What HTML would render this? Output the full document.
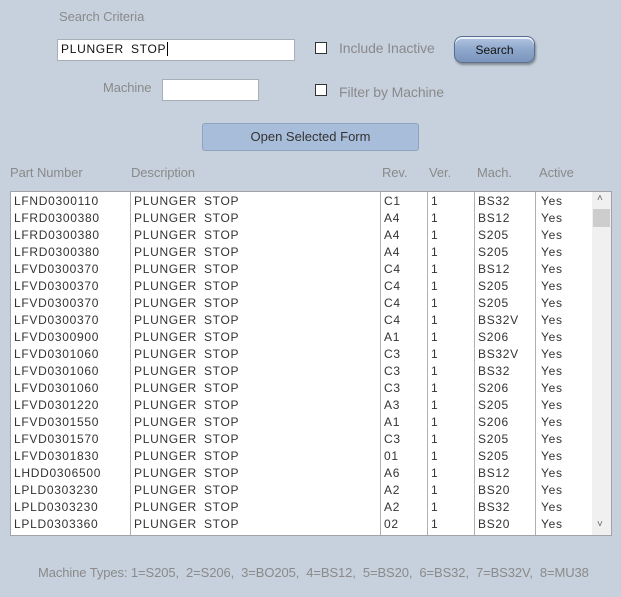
<!DOCTYPE html><html><head><style>
body{margin:0;width:621px;height:597px;background:#c6d1dd;font-family:"Liberation Sans",sans-serif;position:relative;overflow:hidden}
.a{position:absolute;white-space:nowrap}
.lbl{color:#8a8a8a;font-size:13px;letter-spacing:-0.1px}
.inp{background:#fff;border:1px solid #a8aeb6;box-sizing:border-box}
.cb{width:12px;height:12px;border:1px solid #333;background:#fff;box-sizing:border-box}
.list{position:absolute;left:10px;top:191px;width:602px;height:345px;background:#fff;border:1px solid #a0a4a8;box-sizing:border-box}
.r{position:absolute;left:0;width:580px;height:17px;font-size:12px;color:#333;letter-spacing:0.7px;word-spacing:3px;white-space:nowrap}
.r span{position:absolute;top:2px}
.vl{position:absolute;top:0;width:1px;height:343px;background:#b0b0b0}
</style></head><body>
<div class="a lbl" style="left:59px;top:9px">Search Criteria</div>
<div class="a inp" style="left:57px;top:39px;width:238px;height:22px"></div>
<div class="a" style="left:61px;top:42px;font-size:12px;color:#111;letter-spacing:0.7px;word-spacing:3px">PLUNGER STOP<span style="border-left:1px solid #000;margin-left:1px"></span></div>
<div class="a cb" style="left:315px;top:42px"></div>
<div class="a lbl" style="left:339px;top:40px;font-size:14px">Include Inactive</div>
<div class="a" style="left:454px;top:36px;width:81px;height:27px;border-radius:8px;background:linear-gradient(#b3c6e0,#8ea7cc 50%,#7b94bb);border:1px solid #5a6f90;box-sizing:border-box;box-shadow:1px 2px 2px rgba(0,0,0,.35),inset 0 2px 0 #e8f0fa;font-size:12px;text-align:center;line-height:26px;color:#111">Search</div>
<div class="a lbl" style="left:103px;top:80px">Machine</div>
<div class="a inp" style="left:162px;top:79px;width:97px;height:22px"></div>
<div class="a cb" style="left:315px;top:84px"></div>
<div class="a lbl" style="left:339px;top:84px;font-size:14px">Filter by Machine</div>
<div class="a" style="left:202px;top:123px;width:217px;height:28px;background:#a8bdd9;border:1px solid #8fa3bd;border-radius:3px;box-sizing:border-box;font-size:13px;text-align:center;line-height:26px;color:#333">Open Selected Form</div>
<div class="a lbl" style="left:10px;top:165px">Part Number</div>
<div class="a lbl" style="left:131px;top:165px">Description</div>
<div class="a lbl" style="left:382px;top:165px">Rev.</div>
<div class="a lbl" style="left:429px;top:165px">Ver.</div>
<div class="a lbl" style="left:477px;top:165px">Mach.</div>
<div class="a lbl" style="left:539px;top:165px">Active</div>
<div class="list">
<div class="vl" style="left:119px"></div><div class="vl" style="left:369px"></div><div class="vl" style="left:416px"></div><div class="vl" style="left:463px"></div><div class="vl" style="left:524px"></div>
<div style="position:absolute;left:581px;top:0;width:19px;height:343px;background:#f0f0f0"></div>
<div style="position:absolute;left:582px;top:17px;width:17px;height:18px;background:#cdcdcd"></div>
<div style="position:absolute;left:586px;top:1px;font-size:10px;color:#606060">&#708;</div>
<div style="position:absolute;left:586px;top:327px;font-size:10px;color:#606060">&#709;</div>
</div>
<div class="a lbl" style="left:38px;top:565px;font-size:13px;letter-spacing:-0.1px">Machine Types: 1=S205,&nbsp; 2=S206,&nbsp; 3=BO205,&nbsp; 4=BS12,&nbsp; 5=BS20,&nbsp; 6=BS32,&nbsp; 7=BS32V,&nbsp; 8=MU38</div>
<div style="position:absolute;left:11px;top:192px">
<div class="r" style="top:0"><span style="left:3px">LFND0300110</span><span style="left:123px">PLUNGER STOP</span><span style="left:373px">C1</span><span style="left:420px">1</span><span style="left:467px">BS32</span><span style="left:530px">Yes</span></div>
<div class="r" style="top:17px"><span style="left:3px">LFRD0300380</span><span style="left:123px">PLUNGER STOP</span><span style="left:373px">A4</span><span style="left:420px">1</span><span style="left:467px">BS12</span><span style="left:530px">Yes</span></div>
<div class="r" style="top:34px"><span style="left:3px">LFRD0300380</span><span style="left:123px">PLUNGER STOP</span><span style="left:373px">A4</span><span style="left:420px">1</span><span style="left:467px">S205</span><span style="left:530px">Yes</span></div>
<div class="r" style="top:51px"><span style="left:3px">LFRD0300380</span><span style="left:123px">PLUNGER STOP</span><span style="left:373px">A4</span><span style="left:420px">1</span><span style="left:467px">S205</span><span style="left:530px">Yes</span></div>
<div class="r" style="top:68px"><span style="left:3px">LFVD0300370</span><span style="left:123px">PLUNGER STOP</span><span style="left:373px">C4</span><span style="left:420px">1</span><span style="left:467px">BS12</span><span style="left:530px">Yes</span></div>
<div class="r" style="top:85px"><span style="left:3px">LFVD0300370</span><span style="left:123px">PLUNGER STOP</span><span style="left:373px">C4</span><span style="left:420px">1</span><span style="left:467px">S205</span><span style="left:530px">Yes</span></div>
<div class="r" style="top:102px"><span style="left:3px">LFVD0300370</span><span style="left:123px">PLUNGER STOP</span><span style="left:373px">C4</span><span style="left:420px">1</span><span style="left:467px">S205</span><span style="left:530px">Yes</span></div>
<div class="r" style="top:119px"><span style="left:3px">LFVD0300370</span><span style="left:123px">PLUNGER STOP</span><span style="left:373px">C4</span><span style="left:420px">1</span><span style="left:467px">BS32V</span><span style="left:530px">Yes</span></div>
<div class="r" style="top:136px"><span style="left:3px">LFVD0300900</span><span style="left:123px">PLUNGER STOP</span><span style="left:373px">A1</span><span style="left:420px">1</span><span style="left:467px">S206</span><span style="left:530px">Yes</span></div>
<div class="r" style="top:153px"><span style="left:3px">LFVD0301060</span><span style="left:123px">PLUNGER STOP</span><span style="left:373px">C3</span><span style="left:420px">1</span><span style="left:467px">BS32V</span><span style="left:530px">Yes</span></div>
<div class="r" style="top:170px"><span style="left:3px">LFVD0301060</span><span style="left:123px">PLUNGER STOP</span><span style="left:373px">C3</span><span style="left:420px">1</span><span style="left:467px">BS32</span><span style="left:530px">Yes</span></div>
<div class="r" style="top:187px"><span style="left:3px">LFVD0301060</span><span style="left:123px">PLUNGER STOP</span><span style="left:373px">C3</span><span style="left:420px">1</span><span style="left:467px">S206</span><span style="left:530px">Yes</span></div>
<div class="r" style="top:204px"><span style="left:3px">LFVD0301220</span><span style="left:123px">PLUNGER STOP</span><span style="left:373px">A3</span><span style="left:420px">1</span><span style="left:467px">S205</span><span style="left:530px">Yes</span></div>
<div class="r" style="top:221px"><span style="left:3px">LFVD0301550</span><span style="left:123px">PLUNGER STOP</span><span style="left:373px">A1</span><span style="left:420px">1</span><span style="left:467px">S206</span><span style="left:530px">Yes</span></div>
<div class="r" style="top:238px"><span style="left:3px">LFVD0301570</span><span style="left:123px">PLUNGER STOP</span><span style="left:373px">C3</span><span style="left:420px">1</span><span style="left:467px">S205</span><span style="left:530px">Yes</span></div>
<div class="r" style="top:255px"><span style="left:3px">LFVD0301830</span><span style="left:123px">PLUNGER STOP</span><span style="left:373px">01</span><span style="left:420px">1</span><span style="left:467px">S205</span><span style="left:530px">Yes</span></div>
<div class="r" style="top:272px"><span style="left:3px">LHDD0306500</span><span style="left:123px">PLUNGER STOP</span><span style="left:373px">A6</span><span style="left:420px">1</span><span style="left:467px">BS12</span><span style="left:530px">Yes</span></div>
<div class="r" style="top:289px"><span style="left:3px">LPLD0303230</span><span style="left:123px">PLUNGER STOP</span><span style="left:373px">A2</span><span style="left:420px">1</span><span style="left:467px">BS20</span><span style="left:530px">Yes</span></div>
<div class="r" style="top:306px"><span style="left:3px">LPLD0303230</span><span style="left:123px">PLUNGER STOP</span><span style="left:373px">A2</span><span style="left:420px">1</span><span style="left:467px">BS32</span><span style="left:530px">Yes</span></div>
<div class="r" style="top:323px"><span style="left:3px">LPLD0303360</span><span style="left:123px">PLUNGER STOP</span><span style="left:373px">02</span><span style="left:420px">1</span><span style="left:467px">BS20</span><span style="left:530px">Yes</span></div>
</div>
</body></html>
